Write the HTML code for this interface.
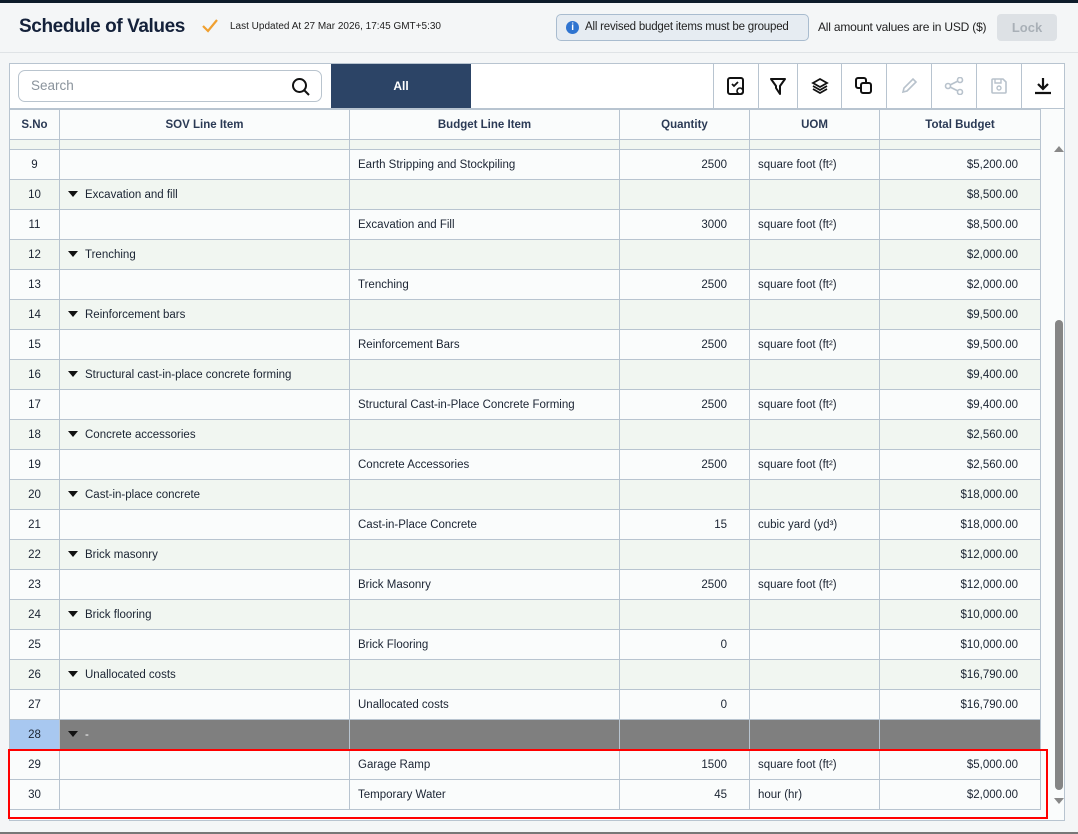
<!DOCTYPE html>
<html><head><meta charset="utf-8"><style>
*{box-sizing:border-box;margin:0;padding:0}
body{width:1078px;height:834px;background:#f4f6f7;font-family:"Liberation Sans",sans-serif;color:#1b2433;position:relative;overflow:hidden}
.top{position:absolute;left:0;top:0;width:1078px;height:3px;background:#0d1b2a}
.title{position:absolute;left:19px;top:16px;font-size:19px;font-weight:bold;color:#14213a;letter-spacing:-0.4px;white-space:nowrap}
.chk{position:absolute;left:201px;top:18px}
.upd{position:absolute;left:230px;top:21px;font-size:10px;color:#222;white-space:nowrap}
.info{position:absolute;left:556px;top:14px;width:253px;height:27px;border:1px solid #a9bccf;border-radius:5px;background:#e6ecf2;font-size:11.5px;line-height:25px;padding-left:28px;color:#222;white-space:nowrap;letter-spacing:-0.2px}
.info i{position:absolute;left:9px;top:6px;width:13px;height:13px;border-radius:50%;background:#2f74d0;color:#fff;font-size:10px;line-height:13px;text-align:center;font-style:normal;font-weight:bold}
.usd{position:absolute;left:818px;top:20px;font-size:12px;color:#222;white-space:nowrap;letter-spacing:-0.2px}
.lock{position:absolute;left:997px;top:14px;width:60px;height:27px;border-radius:4px;background:#dde1e5;color:#a9b0b7;font-size:13px;text-align:center;line-height:27px;font-weight:bold}
.sep{position:absolute;left:0;top:52px;width:1078px;height:1px;background:#dfe3e6}
.panel{position:absolute;left:9px;top:63px;width:1056px;height:758px;border:1px solid #b8c4d0;background:#fafcfc;overflow:hidden}
.tb{position:absolute;left:0;top:0;width:1054px;height:45px;border-bottom:1px solid #b8c4d0;background:#fff}
.search{position:absolute;left:8px;top:6px;width:304px;height:32px;border:1px solid #b9c4ce;border-radius:7px;padding-left:12px;line-height:30px;font-size:13.5px;color:#8a939c}
.search svg{position:absolute;right:10px;top:6px}
.all{position:absolute;left:321px;top:0;width:140px;height:44px;background:#2c4466;color:#fff;font-weight:bold;font-size:12px;text-align:center;line-height:44px}
.btn{position:absolute;top:0;height:44px;border-left:1px solid #b8c4d0;display:flex;align-items:center;justify-content:center}
table{position:absolute;left:-1px;top:45px;border-collapse:collapse;font-size:11.5px;table-layout:fixed;width:1031px}
td,th{border:1px solid #b8c4d0;height:30px;padding:0 8px;white-space:nowrap;overflow:hidden}
tr.thin td{height:10px;padding:0;font-size:0;line-height:0}
th{font-weight:bold;color:#2b3a55;background:#fafcfc;font-size:11.5px}
td.c{text-align:center}
td.r{text-align:right;padding-right:22px}
tr.g td{background:#f1f6f1}
tr.k td{background:#7f7f7f;color:#fff}
tr.k td.s{background:#a8c8f0;color:#1b2433}
.tri{display:inline-block;width:0;height:0;border-left:5px solid transparent;border-right:5px solid transparent;border-top:6px solid #111;margin-right:7px;vertical-align:1px}
.sb{position:absolute;left:1055px;top:320px;width:8px;height:470px;background:#858585;border-radius:4px}
.red{position:absolute;left:8px;top:749px;width:1040px;height:70px;border:2px solid #f00}
.bot{position:absolute;left:0;top:832px;width:1078px;height:2px;background:#777}
</style></head><body>
<div class="top"></div>
<div class="title">Schedule of Values</div>
<svg class="chk" width="18" height="16" viewBox="0 0 18 16"><path d="M2 8l5 5L16 2" fill="none" stroke="#f0a030" stroke-width="2.2"/></svg>
<div class="upd">Last Updated At 27 Mar 2026, 17:45 GMT+5:30</div>
<div class="info"><i>i</i>All revised budget items must be grouped</div>
<div class="usd">All amount values are in USD ($)</div>
<div class="lock">Lock</div>
<div class="sep"></div>
<div class="panel">
<div class="tb">
<div class="search">Search<svg width="20" height="20" viewBox="0 0 20 20"><circle cx="8.5" cy="8.5" r="6.5" fill="none" stroke="#111" stroke-width="2"/><path d="M13 13l5 5" stroke="#111" stroke-width="2"/></svg></div>
<div class="all">All</div>
<div class="btn" style="left:703px;width:45px"><svg width="20" height="20" viewBox="0 0 20 20"><rect x="2" y="2" width="15" height="16" rx="2" fill="none" stroke="#111" stroke-width="2"/><path d="M6 8l2 2 4-4" fill="none" stroke="#111" stroke-width="1.8"/><circle cx="14" cy="15" r="3" fill="#fff" stroke="#111" stroke-width="1.6"/></svg></div>
<div class="btn" style="left:748px;width:39px"><svg width="18" height="20" viewBox="0 0 18 20"><path d="M2 3h14l-5 7v8l-4-6V10z" fill="none" stroke="#111" stroke-width="2" stroke-linejoin="round"/></svg></div>
<div class="btn" style="left:787px;width:44px"><svg width="18" height="18" viewBox="0 0 18 18"><path d="M9 2l7 4-7 4-7-4z" fill="none" stroke="#111" stroke-width="1.8"/><path d="M2 9l7 4 7-4M2 12l7 4 7-4" fill="none" stroke="#111" stroke-width="1.8"/></svg></div>
<div class="btn" style="left:831px;width:45px"><svg width="20" height="20" viewBox="0 0 20 20"><rect x="2" y="2" width="10" height="10" rx="2" fill="none" stroke="#111" stroke-width="2"/><rect x="7" y="7" width="10" height="10" rx="2" fill="#fff" stroke="#111" stroke-width="2"/></svg></div>
<div class="btn" style="left:876px;width:45px"><svg width="18" height="18" viewBox="0 0 18 18"><path d="M3 15l1-4 9-9 3 3-9 9z" fill="none" stroke="#b8c2cc" stroke-width="1.6"/></svg></div>
<div class="btn" style="left:921px;width:45px"><svg width="20" height="18" viewBox="0 0 20 18"><circle cx="4" cy="9" r="2.5" fill="none" stroke="#b8c2cc" stroke-width="1.6"/><circle cx="16" cy="3" r="2.5" fill="none" stroke="#b8c2cc" stroke-width="1.6"/><circle cx="16" cy="15" r="2.5" fill="none" stroke="#b8c2cc" stroke-width="1.6"/><path d="M6 8l8-4M6 10l8 4" stroke="#b8c2cc" stroke-width="1.6"/></svg></div>
<div class="btn" style="left:966px;width:45px"><svg width="18" height="18" viewBox="0 0 18 18"><path d="M2 3a1 1 0 011-1h10l3 3v10a1 1 0 01-1 1H3a1 1 0 01-1-1z" fill="none" stroke="#b8c2cc" stroke-width="1.6"/><path d="M5 2v4h6V2" fill="none" stroke="#b8c2cc" stroke-width="1.4"/><circle cx="9" cy="11" r="2" fill="none" stroke="#b8c2cc" stroke-width="1.4"/></svg></div>
<div class="btn" style="left:1011px;width:43px"><svg width="20" height="20" viewBox="0 0 20 20"><path d="M10 2v11M5 8l5 5 5-5M2 17h16" fill="none" stroke="#111" stroke-width="2.2"/></svg></div>
</div>
<table>
<colgroup><col style="width:50px"><col style="width:290px"><col style="width:270px"><col style="width:130px"><col style="width:130px"><col style="width:161px"></colgroup>
<tr><th>S.No</th><th>SOV Line Item</th><th>Budget Line Item</th><th>Quantity</th><th>UOM</th><th>Total Budget</th></tr>
<tr class="g thin"><td></td><td></td><td></td><td></td><td></td><td></td></tr>
<tr><td class="c">9</td><td></td><td>Earth Stripping and Stockpiling</td><td class="r">2500</td><td>square foot (ft²)</td><td class="r">$5,200.00</td></tr>
<tr class="g"><td class="c">10</td><td><span class="tri"></span>Excavation and fill</td><td></td><td></td><td></td><td class="r">$8,500.00</td></tr>
<tr><td class="c">11</td><td></td><td>Excavation and Fill</td><td class="r">3000</td><td>square foot (ft²)</td><td class="r">$8,500.00</td></tr>
<tr class="g"><td class="c">12</td><td><span class="tri"></span>Trenching</td><td></td><td></td><td></td><td class="r">$2,000.00</td></tr>
<tr><td class="c">13</td><td></td><td>Trenching</td><td class="r">2500</td><td>square foot (ft²)</td><td class="r">$2,000.00</td></tr>
<tr class="g"><td class="c">14</td><td><span class="tri"></span>Reinforcement bars</td><td></td><td></td><td></td><td class="r">$9,500.00</td></tr>
<tr><td class="c">15</td><td></td><td>Reinforcement Bars</td><td class="r">2500</td><td>square foot (ft²)</td><td class="r">$9,500.00</td></tr>
<tr class="g"><td class="c">16</td><td><span class="tri"></span>Structural cast-in-place concrete forming</td><td></td><td></td><td></td><td class="r">$9,400.00</td></tr>
<tr><td class="c">17</td><td></td><td>Structural Cast-in-Place Concrete Forming</td><td class="r">2500</td><td>square foot (ft²)</td><td class="r">$9,400.00</td></tr>
<tr class="g"><td class="c">18</td><td><span class="tri"></span>Concrete accessories</td><td></td><td></td><td></td><td class="r">$2,560.00</td></tr>
<tr><td class="c">19</td><td></td><td>Concrete Accessories</td><td class="r">2500</td><td>square foot (ft²)</td><td class="r">$2,560.00</td></tr>
<tr class="g"><td class="c">20</td><td><span class="tri"></span>Cast-in-place concrete</td><td></td><td></td><td></td><td class="r">$18,000.00</td></tr>
<tr><td class="c">21</td><td></td><td>Cast-in-Place Concrete</td><td class="r">15</td><td>cubic yard (yd³)</td><td class="r">$18,000.00</td></tr>
<tr class="g"><td class="c">22</td><td><span class="tri"></span>Brick masonry</td><td></td><td></td><td></td><td class="r">$12,000.00</td></tr>
<tr><td class="c">23</td><td></td><td>Brick Masonry</td><td class="r">2500</td><td>square foot (ft²)</td><td class="r">$12,000.00</td></tr>
<tr class="g"><td class="c">24</td><td><span class="tri"></span>Brick flooring</td><td></td><td></td><td></td><td class="r">$10,000.00</td></tr>
<tr><td class="c">25</td><td></td><td>Brick Flooring</td><td class="r">0</td><td></td><td class="r">$10,000.00</td></tr>
<tr class="g"><td class="c">26</td><td><span class="tri"></span>Unallocated costs</td><td></td><td></td><td></td><td class="r">$16,790.00</td></tr>
<tr><td class="c">27</td><td></td><td>Unallocated costs</td><td class="r">0</td><td></td><td class="r">$16,790.00</td></tr>
<tr class="k"><td class="c s">28</td><td><span class="tri"></span>-</td><td></td><td></td><td></td><td></td></tr>
<tr><td class="c">29</td><td></td><td>Garage Ramp</td><td class="r">1500</td><td>square foot (ft²)</td><td class="r">$5,000.00</td></tr>
<tr><td class="c">30</td><td></td><td>Temporary Water</td><td class="r">45</td><td>hour (hr)</td><td class="r">$2,000.00</td></tr>
</table>
</div>
<svg style="position:absolute;left:1054px;top:144px" width="10" height="8"><path d="M0 8L5 2 10 8z" fill="#888"/></svg>
<div class="sb"></div>
<svg style="position:absolute;left:1054px;top:798px" width="10" height="8"><path d="M0 0L5 6 10 0z" fill="#888"/></svg>
<div class="red"></div>
<div class="bot"></div>
</body></html>
